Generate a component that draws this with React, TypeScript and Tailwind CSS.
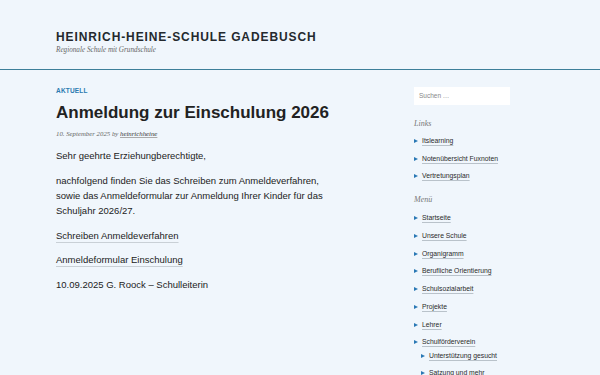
import React from "react"

const sans = { fontFamily: '"Liberation Sans", Arial, sans-serif' }
const serif = { fontFamily: '"Liberation Serif", "Times New Roman", serif' }

const links = ["Itslearning", "Notenübersicht Fuxnoten", "Vertretungsplan"]
const menu = [
  "Startseite",
  "Unsere Schule",
  "Organigramm",
  "Berufliche Orientierung",
  "Schulsozialarbeit",
  "Projekte",
  "Lehrer",
  "Schulförderverein",
]
const subMenu = ["Unterstützung gesucht", "Satzung und mehr"]

const Bullet: React.FC = () => (
  <span className="mr-[4px] inline-block h-0 w-0 border-y-[2.5px] border-l-[4px] border-y-transparent border-l-[#2a78b5]" />
)

const Item: React.FC<{ text: string; sub?: boolean }> = ({ text, sub }) => (
  <li className={sub ? "flex h-[17.5px] items-center pl-[7px]" : "flex h-[17.7px] items-center"}>
    <Bullet />
    <a className="text-[6.8px] leading-[10px] text-[#2b2b2b] underline decoration-[#b9c2ca] underline-offset-2">
      {text}
    </a>
  </li>
)

const App: React.FC = () => {
  return (
    <div className="h-[375px] w-[600px] overflow-hidden bg-[#f0f6fc] text-[#222]" style={sans}>
      <header className="border-b border-[#3d7f99] px-14 pb-[14px] pt-[30px]">
        <h1 className="text-[12px] font-bold uppercase leading-[15px] tracking-[0.075em] text-[#24292e]">
          Heinrich-Heine-Schule Gadebusch
        </h1>
        <p className="text-[7.2px] italic leading-[10px] text-[#666]" style={serif}>
          Regionale Schule mit Grundschule
        </p>
      </header>

      <div className="flex px-14">
        <main className="w-[358px]">
          <div className="mt-[16px] text-[6.5px] font-bold uppercase leading-[10px] tracking-[0.03em] text-[#2a7ab0]">
            Aktuell
          </div>
          <h2 className="mt-[6px] text-[17px] font-bold leading-[22px] text-[#222]">
            Anmeldung zur Einschulung 2026
          </h2>
          <div className="mt-[5px] text-[6.8px] italic leading-[10px] text-[#666]" style={serif}>
            10. September 2025 by{" "}
            <span className="text-[#333] underline decoration-[#aaa] underline-offset-1">heinrichheine</span>
          </div>
          <div className="mt-[9px] flex flex-col gap-[10px] text-[9.5px] leading-[15px] text-[#222]">
            <p>Sehr geehrte Erziehungberechtigte,</p>
            <p>
              nachfolgend finden Sie das Schreiben zum Anmeldeverfahren,
              <br />
              sowie das Anmeldeformular zur Anmeldung Ihrer Kinder für das
              <br />
              Schuljahr 2026/27.
            </p>
            <p>
              <a className="underline decoration-[#c9d0d6] underline-offset-[3px]">Schreiben Anmeldeverfahren</a>
            </p>
            <p className="-mt-[1px]">
              <a className="underline decoration-[#c9d0d6] underline-offset-[3px]">Anmeldeformular Einschulung</a>
            </p>
            <p>10.09.2025 G. Roock – Schulleiterin</p>
          </div>
        </main>

        <aside className="w-[130px] pt-[17px]">
          <div className="flex h-[18px] w-[96px] items-center bg-white px-[5px] text-[6.5px] text-[#888]">
            Suchen …
          </div>
          <h3 className="mt-[14px] text-[8px] italic leading-[10px] text-[#777]" style={serif}>
            Links
          </h3>
          <ul className="mt-[3px]">
            {links.map((t) => (
              <Item key={t} text={t} />
            ))}
          </ul>
          <h3 className="mt-[10px] text-[8px] italic leading-[10px] text-[#777]" style={serif}>
            Menü
          </h3>
          <ul className="mt-[4.5px]">
            {menu.map((t) => (
              <Item key={t} text={t} />
            ))}
            <li className="-mt-[4px]">
              <ul>
                {subMenu.map((t) => (
                  <Item key={t} text={t} sub />
                ))}
              </ul>
            </li>
          </ul>
        </aside>
      </div>
    </div>
  )
}

export default App
